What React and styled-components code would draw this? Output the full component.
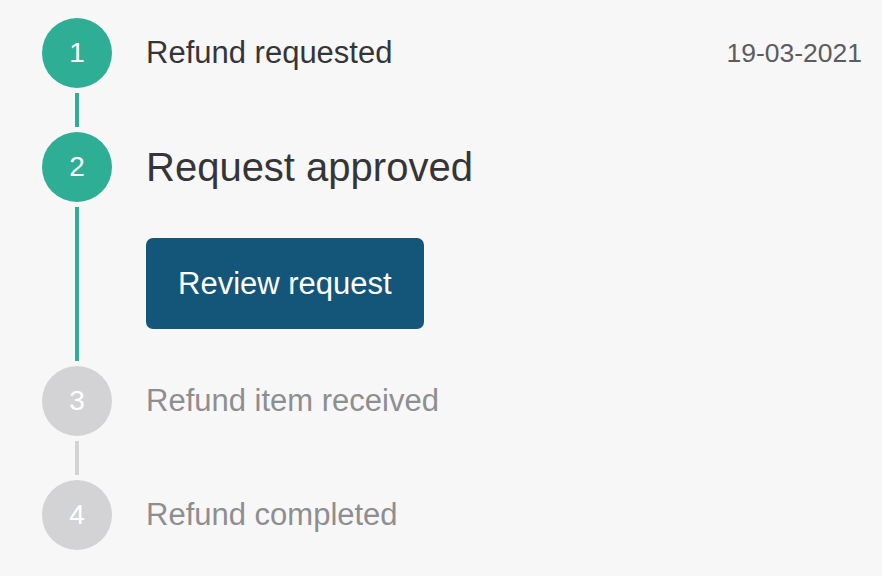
import React from "react";
import styled, { createGlobalStyle } from "styled-components";

const GlobalStyle = createGlobalStyle`
  html, body {
    margin: 0;
    padding: 0;
    background: #f7f7f7;
  }
  body {
    font-family: "Liberation Sans", Arial, Helvetica, sans-serif;
  }
`;

const TEAL = "#2fae96";
const GREY = "#d3d3d6";

const Page = styled.div`
  width: 882px;
  height: 576px;
  box-sizing: border-box;
  padding: 18px 20px 0 42px;
  background: #f7f7f7;
  overflow: hidden;
`;

const StepList = styled.ol`
  list-style: none;
  margin: 0;
  padding: 0;
  display: flex;
  flex-direction: column;
`;

const Step = styled.li`
  display: flex;
  flex-direction: row;
  gap: 34px;
`;

const Rail = styled.div`
  width: 70px;
  flex: 0 0 70px;
  display: flex;
  flex-direction: column;
  align-items: center;
`;

const Circle = styled.div`
  width: 70px;
  height: 70px;
  flex: 0 0 70px;
  border-radius: 50%;
  background: ${(p) => (p.$done ? TEAL : GREY)};
  color: #ffffff;
  font-size: 28px;
  display: flex;
  align-items: center;
  justify-content: center;
`;

const Connector = styled.div`
  width: 4px;
  flex: 1 0 34px;
  margin: 5px 0;
  background: ${(p) => (p.$done ? TEAL : GREY)};
`;

const Content = styled.div`
  flex: 1;
  display: flex;
  flex-direction: column;
  padding-bottom: ${(p) => p.$padBottom || 0}px;
`;

const Header = styled.div`
  height: 70px;
  display: flex;
  align-items: center;
  justify-content: space-between;
`;

const Title = styled.span`
  font-size: ${(p) => (p.$active ? 40 : 31)}px;
  color: ${(p) => (p.$muted ? "#8e8e90" : "#353537")};
`;

const DateText = styled.span`
  font-size: 26.5px;
  color: #5c5c60;
`;

const Button = styled.button`
  align-self: flex-start;
  margin-top: 36px;
  height: 91px;
  padding: 0 32px;
  border: none;
  border-radius: 7px;
  background: #145679;
  color: #ffffff;
  font-family: "Liberation Sans", Arial, Helvetica, sans-serif;
  font-size: 31px;
  cursor: pointer;
`;

const steps = [
  { n: 1, title: "Refund requested", date: "19-03-2021", done: true, line: true },
  { n: 2, title: "Request approved", active: true, done: true, line: true, action: "Review request" },
  { n: 3, title: "Refund item received", done: false, line: true },
  { n: 4, title: "Refund completed", done: false, line: false },
];

export default function App() {
  return (
    <>
      <GlobalStyle />
      <Page>
        <StepList>
          {steps.map((s) => (
            <Step key={s.n}>
              <Rail>
                <Circle $done={s.done}>{s.n}</Circle>
                {s.line && <Connector $done={s.done} />}
              </Rail>
              <Content $padBottom={s.action ? 37 : 0}>
                <Header>
                  <Title $active={s.active} $muted={!s.done}>
                    {s.title}
                  </Title>
                  {s.date && <DateText>{s.date}</DateText>}
                </Header>
                {s.action && <Button>{s.action}</Button>}
              </Content>
            </Step>
          ))}
        </StepList>
      </Page>
    </>
  );
}
